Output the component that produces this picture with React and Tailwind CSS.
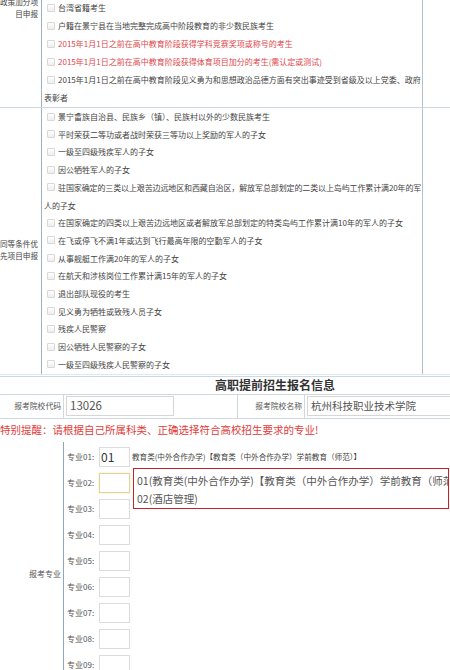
import React from "react";

const Check = () => (
  <span className="inline-block w-[8px] h-[8px] ml-[3px] mr-[3px] align-[-0.5px] border border-[#d8d8d8] bg-gradient-to-b from-white to-[#eeeeee] rounded-[1px]" />
);

const Item = ({ children, red, cont, tight }) => (
  <div className={`whitespace-nowrap pl-[2px] ${tight ? "tracking-[-0.12px]" : ""} ${red ? "text-[#e0474c]" : "text-[#444]"}`}>
    <Check />
    {children}
    {cont ? (
      <>
        <br />
        {cont}
      </>
    ) : null}
  </div>
);

const row1 = [
  { t: "台湾省籍考生" },
  { t: "户籍在景宁县在当地完整完成高中阶段教育的非少数民族考生" },
  { t: "2015年1月1日之前在高中教育阶段获得学科竞赛奖项或称号的考生", red: true },
  { t: "2015年1月1日之前在高中教育阶段获得体育项目加分的考生(需认定或测试)", red: true },
  { t: "2015年1月1日之前在高中教育阶段见义勇为和思想政治品德方面有突出事迹受到省级及以上党委、政府", cont: "表彰者" },
];

const row2 = [
  { t: "景宁畲族自治县、民族乡（镇）、民族村以外的少数民族考生" },
  { t: "平时荣获二等功或者战时荣获三等功以上奖励的军人的子女" },
  { t: "一级至四级残疾军人的子女" },
  { t: "因公牺牲军人的子女" },
  { t: "驻国家确定的三类以上艰苦边远地区和西藏自治区，解放军总部划定的二类以上岛屿工作累计满20年的军", cont: "人的子女", tight: true },
  { t: "在国家确定的四类以上艰苦边远地区或者解放军总部划定的特类岛屿工作累计满10年的军人的子女" },
  { t: "在飞或停飞不满1年或达到飞行最高年限的空勤军人的子女" },
  { t: "从事舰艇工作满20年的军人的子女" },
  { t: "在航天和涉核岗位工作累计满15年的军人的子女" },
  { t: "退出部队现役的考生" },
  { t: "见义勇为牺牲或致残人员子女" },
  { t: "残疾人民警察" },
  { t: "因公牺牲人民警察的子女" },
  { t: "一级至四级残疾人民警察的子女" },
];

const Label = ({ lines }) => (
  <div className="flex flex-col items-end pr-[3px] text-[7.6px] leading-[12px] text-[#444]">
    {lines.map((l) => (
      <div key={l} className="whitespace-nowrap">
        {l}
      </div>
    ))}
  </div>
);

const majors = ["01", "02", "03", "04", "05", "06", "07", "08", "09"];

export default function App() {
  return (
    <div className="relative w-[450px] h-[670px] overflow-hidden bg-white font-['Noto_Sans_CJK_SC','Noto_Sans',sans-serif]">
      {/* Row 1 */}
      <div className="flex -mt-[1px] border-b border-[#cfd8df]">
        <div className="w-[42px] shrink-0 border-r border-[#9fb0c0] overflow-visible">
          <div className="-mt-[3px]">
            <Label lines={["政策加分项", "目申报"]} />
          </div>
        </div>
        <div className="w-[381px] shrink-0 border-r border-[#b4c0ca] text-[8px] leading-[18px] overflow-hidden">
          {row1.map((r) => (
            <Item key={r.t} red={r.red} cont={r.cont}>
              {r.t}
            </Item>
          ))}
        </div>
        <div className="flex-1" />
      </div>

      {/* Row 2 */}
      <div className="flex border-b border-[#d5ecf3]">
        <div className="w-[42px] shrink-0 border-r border-[#9fb0c0] flex flex-col justify-center pt-[18px]">
          <Label lines={["同等条件优", "先项目申报"]} />
        </div>
        <div className="w-[381px] shrink-0 border-r border-[#b4c0ca] text-[8px] leading-[17.7px] overflow-hidden">
          {row2.map((r) => (
            <Item key={r.t} red={r.red} cont={r.cont} tight={r.tight}>
              {r.t}
            </Item>
          ))}
        </div>
        <div className="flex-1" />
      </div>

      {/* Title */}
      <div className="mt-[1px] h-[19px] border-t border-b border-[#cfd8df] flex items-center pl-[215px]">
        <span className="whitespace-nowrap text-[12px] font-bold text-[#333] leading-none">高职提前招生报名信息</span>
      </div>

      {/* School row */}
      <div className="flex h-[24px] border-b border-[#cfd8df]">
        <div className="w-[64px] shrink-0 border-r border-[#cfd8df] flex items-center justify-end pr-[2px]">
          <span className="whitespace-nowrap text-[7.8px] text-[#555]">报考院校代码</span>
        </div>
        <div className="w-[174px] shrink-0 border-r border-[#cfd8df] flex items-center pl-[2px]">
          <div className="w-[108px] h-[20px] border border-[#d6d6d6] flex items-center pl-[3px] text-[11.5px] text-[#555]">
            13026
          </div>
        </div>
        <div className="w-[67px] shrink-0 border-r border-[#cfd8df] flex items-center justify-end pr-[2px]">
          <span className="whitespace-nowrap text-[7.8px] text-[#555]">报考院校名称</span>
        </div>
        <div className="flex-1 flex items-center pl-[2px] overflow-hidden">
          <div className="w-[200px] shrink-0 h-[20px] border border-[#d6d6d6] flex items-center pl-[3px] text-[10.5px] text-[#555] whitespace-nowrap">
            杭州科技职业技术学院
          </div>
        </div>
      </div>

      {/* Warning */}
      <div className="h-[23px] flex items-center">
        <span className="whitespace-nowrap text-[10.5px] text-[#e23b3b]">
          特别提醒：请根据自己所属科类、正确选择符合高校招生要求的专业!
        </span>
      </div>

      {/* Majors */}
      <div className="flex">
        <div className="w-[64px] shrink-0 border-r border-[#8ea6bf] pt-[126px] flex justify-end pr-[2px]">
          <span className="whitespace-nowrap text-[8px] leading-[12px] text-[#555]">报考专业</span>
        </div>
        <div className="flex-1 pt-[5px] pl-[3px]">
          {majors.map((m, i) => (
            <div key={m} className="flex items-center h-[20px] mb-[6px]">
              <span className="w-[32px] shrink-0 whitespace-nowrap text-[8px] text-[#555]">专业{m}:</span>
              <div
                className={`w-[31px] h-[20px] shrink-0 border flex items-center pl-[1px] text-[12px] text-[#333] ${
                  i === 1 ? "border-[#e2d394] shadow-[0_0_2px_#f0e6b8]" : "border-[#dcdcdc]"
                }`}
              >
                {i === 0 ? "01" : ""}
              </div>
              {i === 0 ? (
                <span className="ml-[2px] whitespace-nowrap text-[7.6px] text-[#444]">
                  教育类(中外合作办学)【教育类（中外合作办学）学前教育（师范）】
                </span>
              ) : null}
            </div>
          ))}
        </div>
      </div>

      {/* Dropdown overlay */}
      <div className="absolute left-[133px] top-[468px] w-[316px] h-[41px] border border-[#c8202a] bg-white pl-[3px] pt-[3px] overflow-hidden text-[10.5px] leading-[18px] text-[#555] whitespace-nowrap">
        <div>01(教育类(中外合作办学)【教育类（中外合作办学）学前教育（师范）】)</div>
        <div>02(酒店管理)</div>
      </div>
    </div>
  );
}
